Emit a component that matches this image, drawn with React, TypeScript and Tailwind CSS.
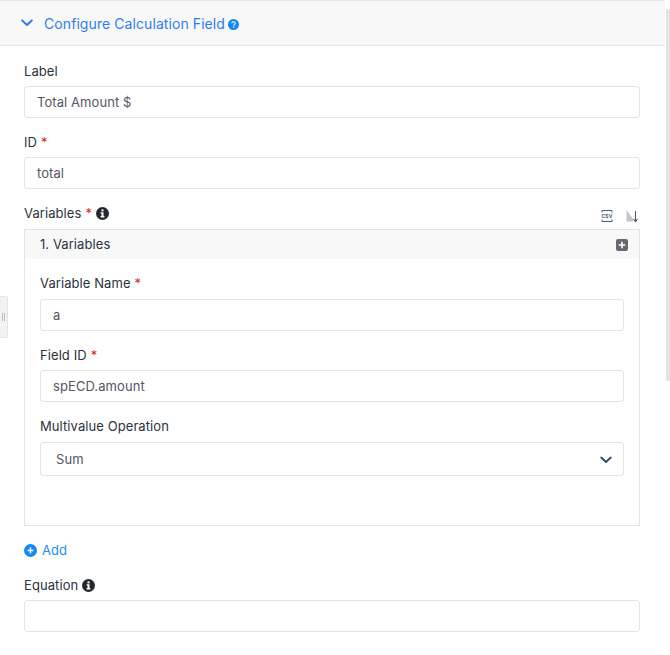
import React from 'react';

const InfoIcon = () => (
    <svg width="13" height="13" viewBox="0 0 13 13" className="shrink-0">
        <circle cx="6.5" cy="6.5" r="6.5" fill="#23272e" />
        <rect x="5.5" y="2.4" width="2" height="2" fill="#fff" />
        <path d="M4.6 5.3H7.5V9.1H8.4V10.4H4.6V9.1H5.5V6.6H4.6Z" fill="#fff" />
    </svg>
);

const Required = () => <span className="text-[#dc2626] ml-1">*</span>;

const Field: React.FC<{ value?: string }> = ({ value }) => (
    <div className="h-8 border border-[#e4e4e4] rounded-[3px] bg-white pl-3 pt-px flex items-center text-[13px] text-[#555566]">
        {value}
    </div>
);

const App: React.FC = () => {
    return (
        <div className="relative w-[670px] h-[655px] bg-white overflow-hidden text-[13px] tracking-[0.08px] text-[#2b3240] font-['Inter','Noto_Sans',sans-serif] flex">
            {/* Drag handle */}
            <div className="absolute left-0 top-[296px] w-2 h-[42px] bg-[#f2f2f2] border border-l-0 border-[#e4e4e4] rounded-r-[2px] flex items-center justify-center gap-px">
                <span className="w-px h-2 bg-[#bdbdbd]" />
                <span className="w-px h-2 bg-[#bdbdbd]" />
            </div>

            <div className="w-[665px] shrink-0">
                {/* Header */}
                <div className="h-[46px] bg-[#f8f8f8] border-t border-b border-[#e4e4e4] flex items-center pl-[21px]">
                    <svg width="12" height="8" viewBox="0 0 12 8" fill="none" stroke="#2f7df2" strokeWidth="2" strokeLinecap="round" strokeLinejoin="round">
                        <path d="M1.2 1.5 6 6 10.8 1.5" />
                    </svg>
                    <span className="ml-[11px] text-[14px] font-normal text-[#2f7df2]">Configure Calculation Field</span>
                    <svg width="11" height="11" viewBox="0 0 11 11" className="ml-[3px] mt-0.5">
                        <circle cx="5.5" cy="5.5" r="5.5" fill="#1689f0" />
                        <path d="M3.7 4.2C3.8 3.2 4.6 2.7 5.5 2.7 6.5 2.7 7.3 3.3 7.3 4.2 7.3 5.3 5.9 5.3 5.7 6.6" fill="none" stroke="#fff" strokeWidth="1.1" />
                        <rect x="5" y="7.4" width="1.2" height="1.2" fill="#fff" />
                    </svg>
                </div>

                <div className="ml-6 w-[616px] pt-[15px]">
                    <div className="h-5 leading-5 mb-[5px]">Label</div>
                    <Field value="Total Amount $" />

                    <div className="h-5 leading-5 mt-[14px] mb-[5px]">ID<Required /></div>
                    <Field value="total" />

                    <div className="h-5 pt-px mt-[14px] mb-1.5 flex items-center relative">
                        <span>Variables</span>
                        <Required />
                        <span className="ml-1"><InfoIcon /></span>
                        <div className="absolute right-[1px] top-[6px] flex items-center gap-[13px]">
                            <svg width="12" height="14" viewBox="0 0 12 14" fill="none">
                                <path d="M1 3.5V1.5H11V3.5M1 10.5V12.5H11V10.5" stroke="#4a5a70" strokeWidth="1" />
                                <text x="6" y="9" textAnchor="middle" fontSize="5" fontWeight="700" fill="#4a5a70" fontFamily="Inter, sans-serif">CSV</text>
                            </svg>
                            <svg width="13" height="14" viewBox="0 0 13 14" fill="none">
                                <path d="M0.5 1V12.5H7V10Z" fill="#c4c4c4" />
                                <path d="M9.5 2V12M7.5 10 9.5 12.5 11.5 10" stroke="#4a5a70" strokeWidth="1.1" />
                            </svg>
                        </div>
                    </div>

                    {/* Variables card */}
                    <div className="h-[297px] border border-[#e4e4e4]">
                        <div className="h-[29px] bg-[#f8f8f8] flex items-center justify-between pl-[15px] pr-[11px]">
                            <span>1. Variables</span>
                            <svg width="12" height="12" viewBox="0 0 12 12">
                                <rect width="12" height="12" rx="2" fill="#666a70" />
                                <path d="M6 2.8V9.2M2.8 6H9.2" stroke="#fff" strokeWidth="1.6" />
                            </svg>
                        </div>
                        <div className="px-[15px] pt-3.5">
                            <div className="h-5 leading-5 mb-1.5">Variable Name<Required /></div>
                            <Field value="a" />

                            <div className="h-5 leading-5 mt-[14px] mb-[5px]">Field ID<Required /></div>
                            <Field value="spECD.amount" />

                            <div className="h-5 leading-5 mt-[14px] mb-1.5">Multivalue Operation</div>
                            <div className="h-[34px] border border-[#e4e4e4] rounded-[3px] pl-[15px] pr-[11px] pt-px flex items-center justify-between text-[#555566]">
                                <span>Sum</span>
                                <svg width="12" height="8" viewBox="0 0 12 8" fill="none" stroke="#2f4a6b" strokeWidth="1.8" strokeLinecap="round" strokeLinejoin="round">
                                    <path d="M1.2 1.5 6 6 10.8 1.5" />
                                </svg>
                            </div>
                        </div>
                    </div>

                    <div className="h-5 mt-[14px] flex items-center text-[#1a91f0] pt-px">
                        <svg width="13" height="13" viewBox="0 0 13 13" className="-mt-px">
                            <circle cx="6.5" cy="6.5" r="6.5" fill="#1689f0" />
                            <path d="M6.5 3.6V9.4M3.6 6.5H9.4" stroke="#fff" strokeWidth="1.4" />
                        </svg>
                        <span className="ml-[5px]">Add</span>
                    </div>

                    <div className="h-5 pt-px mt-[15px] mb-[5px] flex items-center">
                        <span>Equation</span>
                        <span className="ml-1"><InfoIcon /></span>
                    </div>
                    <Field />
                </div>
            </div>

            {/* Scrollbar */}
            <div className="flex-1 pt-[9px] pl-px">
                <div className="w-1 h-[372px] bg-[#e4e4e4]" />
            </div>
        </div>
    );
};

export default App;
